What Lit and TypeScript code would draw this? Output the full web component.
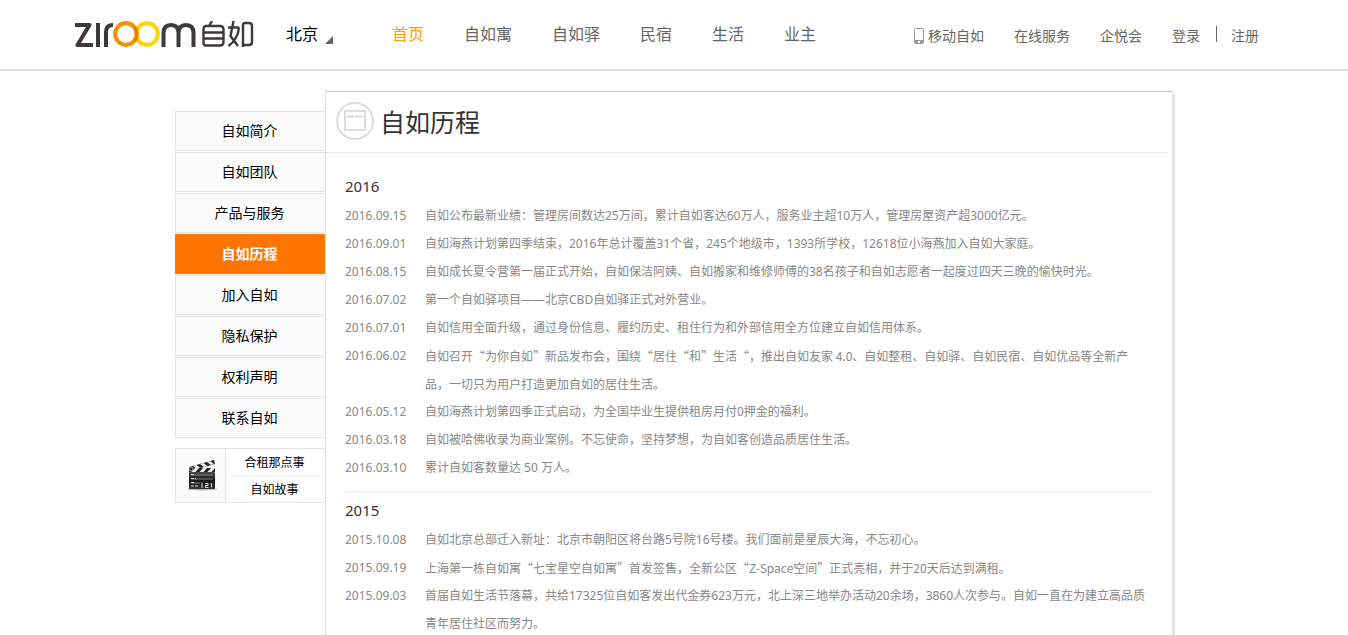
import { LitElement, html, css, svg } from "lit";
import { customElement } from "lit/decorators.js";

type Entry = [date: string, text: string];
interface Year { year: string; entries: Entry[]; }

const NAV = ["首页", "自如寓", "自如驿", "民宿", "生活", "业主"];
const SIDE = ["自如简介", "自如团队", "产品与服务", "自如历程", "加入自如", "隐私保护", "权利声明", "联系自如"];
const CURRENT = "自如历程";

const YEARS: Year[] = [
  {
    year: "2016",
    entries: [
      ["2016.09.15", "自如公布最新业绩：管理房间数达25万间，累计自如客达60万人，服务业主超10万人，管理房屋资产超3000亿元。"],
      ["2016.09.01", "自如海燕计划第四季结束，2016年总计覆盖31个省，245个地级市，1393所学校，12618位小海燕加入自如大家庭。"],
      ["2016.08.15", "自如成长夏令营第一届正式开始，自如保洁阿姨、自如搬家和维修师傅的38名孩子和自如志愿者一起度过四天三晚的愉快时光。"],
      ["2016.07.02", "第一个自如驿项目——北京CBD自如驿正式对外营业。"],
      ["2016.07.01", "自如信用全面升级，通过身份信息、履约历史、租住行为和外部信用全方位建立自如信用体系。"],
      ["2016.06.02", "自如召开“为你自如”新品发布会，围绕“居住“和”生活“，推出自如友家 4.0、自如整租、自如驿、自如民宿、自如优品等全新产品，一切只为用户打造更加自如的居住生活。"],
      ["2016.05.12", "自如海燕计划第四季正式启动，为全国毕业生提供租房月付0押金的福利。"],
      ["2016.03.18", "自如被哈佛收录为商业案例。不忘使命，坚持梦想，为自如客创造品质居住生活。"],
      ["2016.03.10", "累计自如客数量达 50 万人。"],
    ],
  },
  {
    year: "2015",
    entries: [
      ["2015.10.08", "自如北京总部迁入新址：北京市朝阳区将台路5号院16号楼。我们面前是星辰大海，不忘初心。"],
      ["2015.09.19", "上海第一栋自如寓“七宝星空自如寓”首发签售，全新公区“Z-Space空间”正式亮相，并于20天后达到满租。"],
      ["2015.09.03", "首届自如生活节落幕，共给17325位自如客发出代金券623万元，北上深三地举办活动20余场，3860人次参与。自如一直在为建立高品质青年居住社区而努力。"],
    ],
  },
];

/* Entries with quotation marks use the Chinese face throughout, so the marks are full width. */
const faceOf = (text: string) => (/[“”]/.test(text) ? "quoted" : "plain");

const logo = svg`
  <g fill="none" stroke="#3e3a39" stroke-width="4">
    <path d="M0 4H14.500L2.500 24H18" stroke-linejoin="round"/>
    <path d="M23 2V26"/>
    <path d="M31 26V11Q31 4 38 4"/>
    <path d="M88.500 26V12Q88.500 4 96 4Q103.500 4 103.500 12V26M103.500 12Q103.500 4 111 4Q118.500 4 118.500 12V26"/>
  </g>
  <circle cx="51" cy="13" r="10.800" fill="none" stroke="#f39200" stroke-width="4.200"/>
  <circle cx="72" cy="13" r="10.800" fill="none" stroke="#ffd50a" stroke-width="4.200"/>
  <path d="M60 6.500Q63.500 13 60 19.500" fill="none" stroke="#ef7a00" stroke-width="3.600"/>
  <g fill="none" stroke="#3e3a39" stroke-width="2.400" stroke-linejoin="round">
    <path d="M128.500 22V8.500Q128.500 5 131 5H145Q148.500 5 148.500 8.500V21Q148.500 24.500 145 24.500H131Q128.500 24.500 128.500 22V8M128.500 11.500H148.500M128.500 17.500H148.500M137 0L134 5"/>
    <path d="M153 6.500H164M158.500 0L155.500 15L163 25M164 6.500Q163 18 153.500 25M168 26V4Q168 2 170 2H174Q177 2 177 5V21Q177 24 174 24H168"/>
  </g>`;

const clapper = svg`
  <defs>
    <linearGradient id="board" x1="0" y1="0" x2="0" y2="1">
      <stop offset="0" stop-color="#4a4a4a"/><stop offset=".5" stop-color="#161616"/><stop offset="1" stop-color="#333"/>
    </linearGradient>
  </defs>
  <ellipse cx="15" cy="29" rx="15" ry="1.500" fill="#bbb"/>
  <rect x="2" y="12" width="26" height="17" rx="1" fill="url(#board)"/>
  <path d="M2 7L27 0L28 4L3 11Z" fill="#222"/>
  <path d="M6 6L10 9L13.500 8L9.500 5ZM13 4L17 7L20.500 6L16.500 3ZM20 2L24 5L27 4L23 1Z" fill="#eee"/>
  <path d="M2 8H28V12H2Z" fill="#222"/>
  <path d="M8 8H12L8.500 12H4.500ZM16 8H20L16.500 12H12.500ZM24 8H28L24.500 12H20.500Z" fill="#eee"/>
  <circle cx="4" cy="9" r="2" fill="#222" stroke="#ddd" stroke-width=".7"/>
  <path d="M4 15H26M4 19H26M4 23H13" stroke="#999" stroke-width=".8"/>
  <path d="M4 14.500H8M4 18.500H9M4 22.500H7M4 26H12" stroke="#ddd" stroke-width="1" stroke-dasharray="3 1"/>
  <path d="M15 22.500V28M18.500 23.500H21V25.500H18.500V27.500H21.500M23.500 23.500H24.500V27.500" fill="none" stroke="#ddd" stroke-width="1"/>`;

@customElement("app-root")
export class AppRoot extends LitElement {
  static styles = css`
    :host {
      display: block;
      height: 100vh;
      overflow: hidden;
      background: #fff;
      color: #000;
      font-family: "Noto Sans", "Noto Sans CJK SC", sans-serif;
      font-size: 14px;
    }
    * { box-sizing: border-box; }
    a { color: inherit; text-decoration: none; }
    h1, h2, p, ul, dl, dd { margin: 0; padding: 0; font-weight: 400; }
    ul { list-style: none; }
    svg { display: block; flex: none; }

    .header {
      border-bottom: 2px solid #ddd;
    }
    .bar {
      display: flex;
      align-items: center;
      width: 1198px;
      max-width: 100%;
      height: 69px;
      margin: 0 auto;
    }
    .city {
      display: flex;
      align-items: center;
      gap: 7px;
      margin: 0 0 2px 31px;
      padding: 0;
      border: 0;
      background: none;
      color: #000;
      font: inherit;
      font-size: 16px;
      line-height: 24px;
    }
    .arrow { margin-top: 12px; }
    .nav {
      display: flex;
      gap: 40px;
      margin: 0 0 2px 59px;
      color: #666;
      font-size: 16px;
      line-height: 24px;
    }
    .nav .on { color: #ff9c00; }
    .tools {
      display: flex;
      align-items: center;
      gap: 30px;
      margin-left: auto;
      padding: 2px 14px 0 0;
      color: #666;
      line-height: 20px;
    }
    .mobile { display: flex; align-items: center; gap: 3px; }
    .account { display: flex; }
    .divider {
      height: 16px;
      margin: 0 14px 0 16px;
      border-left: 1px solid #666;
    }

    .page {
      display: flex;
      align-items: flex-start;
      width: 998px;
      max-width: 100%;
      margin: 20px auto 0;
    }
    .side { width: 150px; flex: none; padding-top: 20px; }
    .menu { display: grid; gap: 1px; }
    .menu a {
      display: block;
      padding-right: 2px;
      border: 1px solid #e4e4e4;
      border-right: 0;
      background: #fafafa;
      line-height: 38px;
      text-align: center;
    }
    .menu .on {
      border-color: #ff7500;
      background: #ff7500;
      color: #fff;
      font-weight: 700;
    }
    .extra {
      display: flex;
      margin-top: 10px;
      border: 1px solid #e4e4e4;
      border-right: 0;
      font-size: 12px;
    }
    .film {
      display: grid;
      place-items: center;
      width: 50px;
      padding-left: 2px;
      border-right: 1px solid #e4e4e4;
      background: #fafafa;
    }
    .links { flex: 1; padding: 0 5px; text-align: center; }
    .links li + li { border-top: 1px dotted #ddd; }
    .links a { display: block; height: 26px; padding-right: 2px; line-height: 28px; }

    .panel {
      flex: 1;
      min-width: 0;
      border: solid #e4e4e4;
      border-width: 1px 1px 0 1px;
      border-top-color: #ffb97f;
      box-shadow: 2px 3px 0 #e4e4e4;
    }
    .title {
      display: flex;
      align-items: center;
      gap: 6px;
      height: 61px;
      padding: 0 10px 2px;
      border-bottom: 1px dotted #ddd;
    }
    .title h1 { padding-top: 2px; color: #333; font-size: 25px; line-height: 36px; }
    .years { padding: 19px 20px 0 19px; }
    .year { padding-bottom: 9px; border-bottom: 1px dotted #ddd; }
    .year + .year { padding-top: 4px; }
    .year h2 { margin-bottom: 2px; color: #333; font-size: 15px; line-height: 28px; }
    .entry { display: flex; color: #888; font-size: 12px; line-height: 28px; }
    .entry dt { width: 80px; flex: none; }
    .quoted { font-family: "Noto Sans CJK SC", sans-serif; }
  `;

  render() {
    return html`
      <header class="header">
        <div class="bar">
          <a href="#" aria-label="自如"><svg width="180" height="27" viewBox="0 0 180 27">${logo}</svg></a>
          <button class="city" type="button">北京
            <svg class="arrow" width="8" height="8"><path d="M8 0V8H0Z" fill="#666"/></svg>
          </button>
          <nav class="nav">
            ${NAV.map((item, i) => html`<a href="#" class=${i === 0 ? "on" : ""}>${item}</a>`)}
          </nav>
          <div class="tools">
            <a class="mobile" href="#">
              <svg width="11" height="16" viewBox="0 0 11 16">
                <rect x=".5" y=".5" width="9" height="15" rx="1" fill="#fff" stroke="#999"/>
                <path d="M1 12H9V15H1Z" fill="#999"/><path d="M4 13H6V15H4Z" fill="#fff"/>
              </svg>移动自如</a>
            <a href="#">在线服务</a>
            <a href="#">企悦会</a>
            <div class="account"><a href="#">登录</a><span class="divider"></span><a href="#">注册</a></div>
          </div>
        </div>
      </header>
      <div class="page">
        <aside class="side">
          <nav class="menu">
            ${SIDE.map((item) => html`<a href="#" class=${item === CURRENT ? "on" : ""}>${item}</a>`)}
          </nav>
          <div class="extra">
            <div class="film"><svg width="30" height="31" viewBox="0 0 30 31">${clapper}</svg></div>
            <ul class="links">
              <li><a href="#">合租那点事</a></li>
              <li><a href="#">自如故事</a></li>
            </ul>
          </div>
        </aside>
        <main class="panel">
          <div class="title">
            <svg width="38" height="38" viewBox="0 0 38 38" fill="none" stroke="#ddd">
              <circle cx="19" cy="19" r="18" stroke-width="2"/>
              <rect x="9" y="9" width="20" height="19" stroke-width="2"/>
              <path d="M10 14.500H28" stroke-width="1"/>
              <path d="M12 14.500H18M20 14.500H26" stroke-width="3" stroke-dasharray="2 1"/>
            </svg>
            <h1>自如历程</h1>
          </div>
          <div class="years">
            ${YEARS.map((y) => html`
              <section class="year">
                <h2>${y.year}</h2>
                <dl>
                  ${y.entries.map(([date, text]) => html`
                    <div class="entry"><dt>${date}</dt><dd class=${faceOf(text)}>${text}</dd></div>`)}
                </dl>
              </section>`)}
          </div>
        </main>
      </div>
    `;
  }
}
